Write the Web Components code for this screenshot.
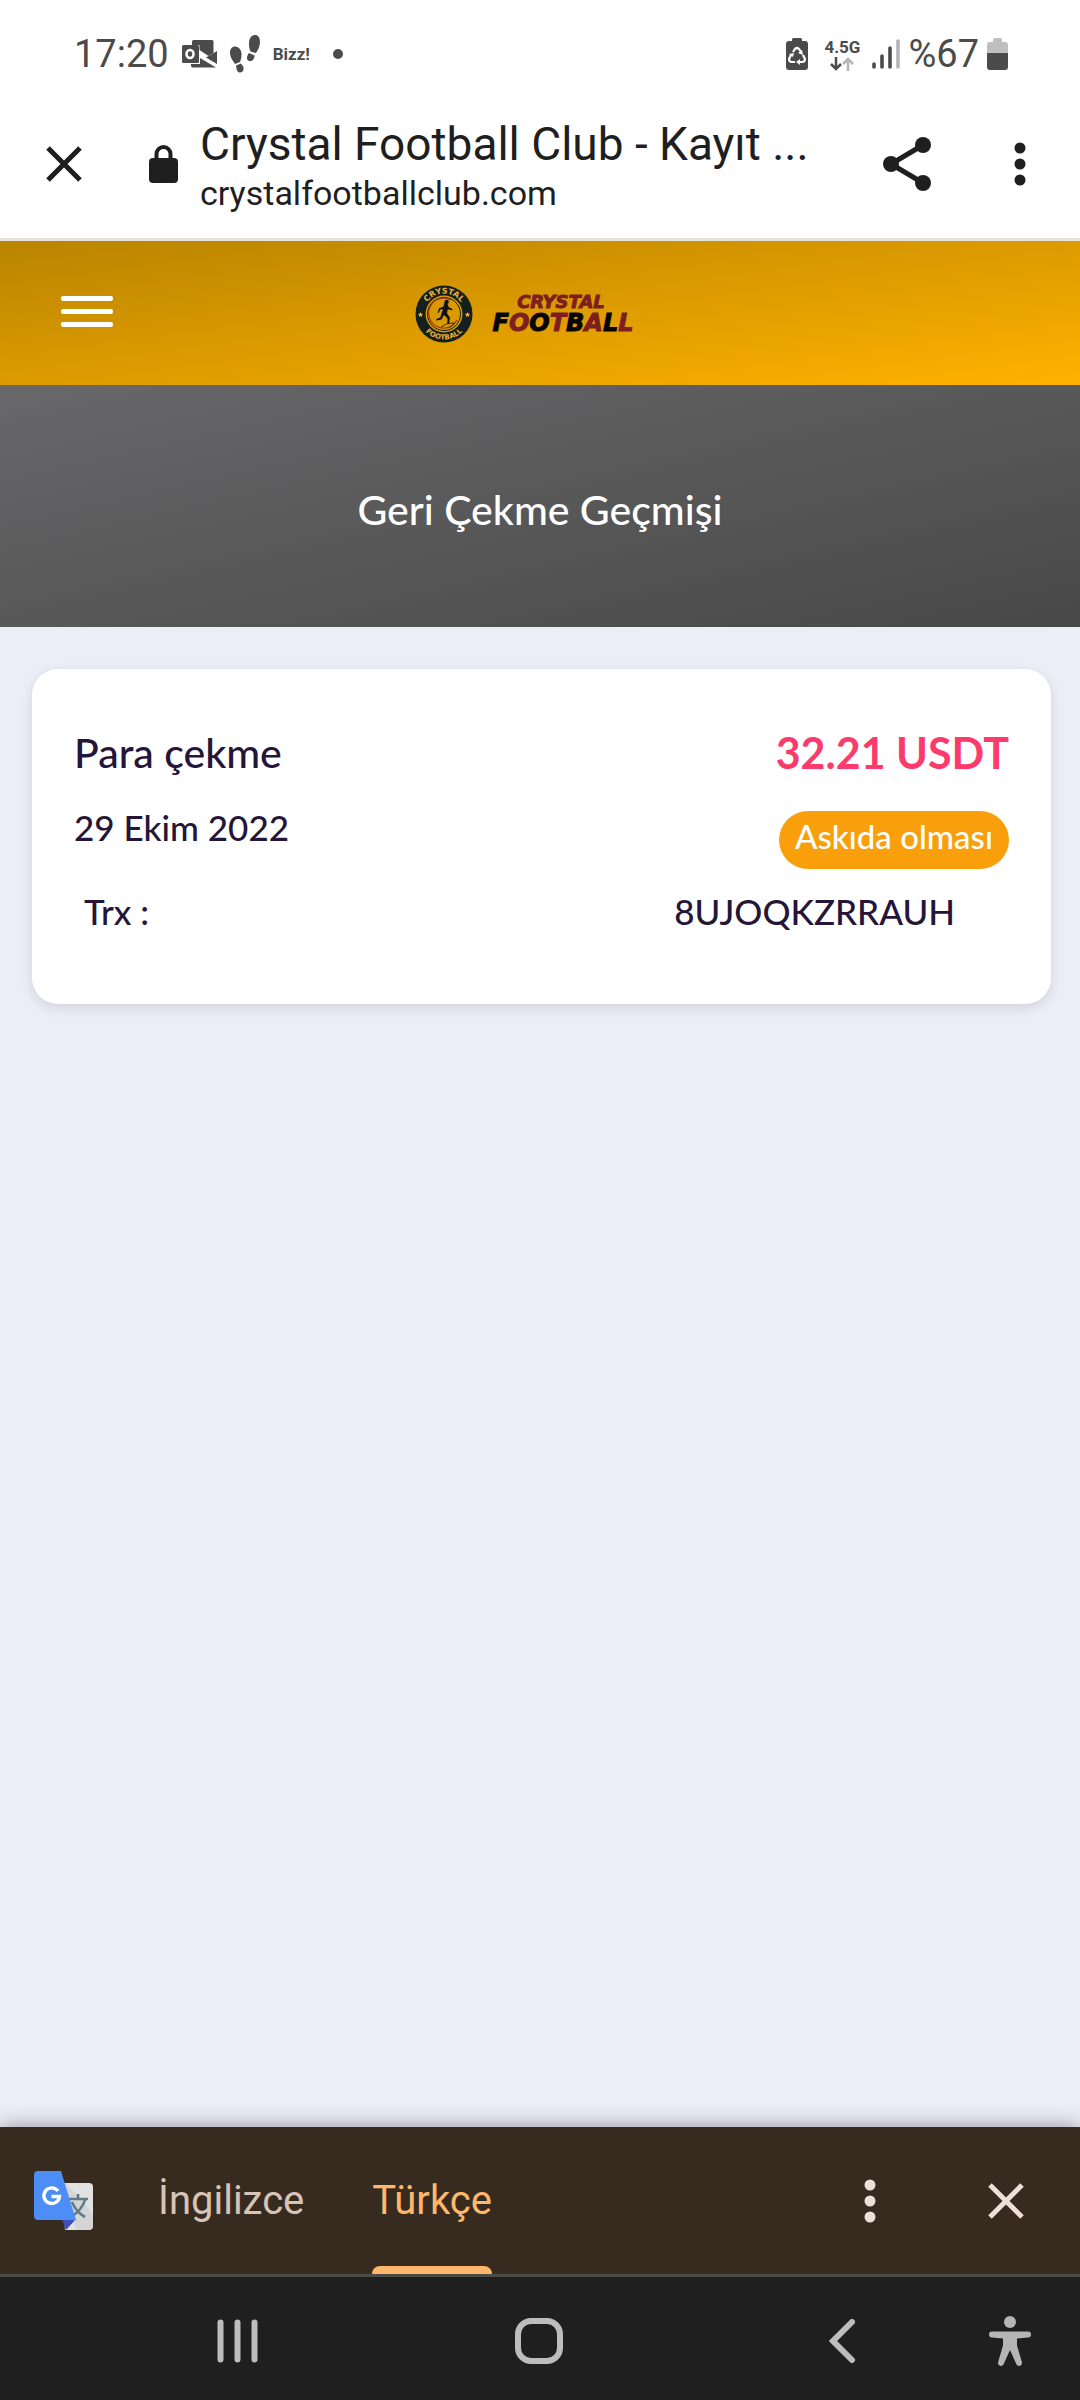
<!DOCTYPE html>
<html lang="tr">
<head>
<meta charset="utf-8">
<meta name="viewport" content="width=device-width, initial-scale=1">
<title>Crystal Football Club - Kayıt</title>
<style>
  html, body { margin: 0; min-height: 100%; }
  body {
    --ui-font: Roboto, "Noto Sans", sans-serif;
    --site-font: Lato, "Open Sans", sans-serif;
    --ink: #1f1f1f;
    font-family: var(--ui-font);
    background: #ecedf6;
  }
  app-shell { min-height: 100vh; }
</style>
</head>
<body>
<app-shell>
  <status-bar slot="top" time="17:20" note="Bizz!" network="4.5G" level="%67"></status-bar>
  <browser-bar slot="top">
    <span slot="title">Crystal Football Club - Kayıt ...</span>
    <span slot="url">crystalfootballclub.com</span>
  </browser-bar>
  <site-header></site-header>
  <page-hero>Geri Çekme Geçmişi</page-hero>
  <withdrawal-card>
    <span slot="kind">Para çekme</span>
    <span slot="amount">32.21 USDT</span>
    <span slot="date">29 Ekim 2022</span>
    <span slot="state">Askıda olması</span>
    <span slot="key">Trx :</span>
    <span slot="code">8UJOQKZRRAUH</span>
  </withdrawal-card>
  <translate-bar slot="bottom"></translate-bar>
  <system-nav slot="bottom"></system-nav>
</app-shell>

<script>
const RESET = `
  :host, *, *::before, *::after { box-sizing: border-box; }
  button { appearance: none; border: 0; margin: 0; padding: 0; background: none; color: inherit; font: inherit; display: flex; align-items: center; justify-content: center; cursor: pointer; }
  svg { display: block; flex: none; }
`;
function define(name, css, html) {
  const template = document.createElement('template');
  customElements.define(name, class extends HTMLElement {
    constructor() {
      super();
      const attrs = key => this.getAttribute(key) || '';
      template.innerHTML = `<style>${RESET}${css}</style>` + (typeof html === 'function' ? html(attrs) : html);
      this.attachShadow({ mode: 'open' }).append(template.content.cloneNode(true));
    }
  });
}
const CLOSE = `<svg width="36" height="36" viewBox="0 0 36 36" fill="none" stroke="currentColor" stroke-width="5"><path d="M2 2 34 34M34 2 2 34"/></svg>`;
const DOTS = `<svg width="12" height="44" viewBox="0 0 12 44" fill="currentColor"><circle cx="6" cy="6" r="5.5"/><circle cx="6" cy="22" r="5.5"/><circle cx="6" cy="38" r="5.5"/></svg>`;

define('app-shell', `
  :host { display: flex; flex-direction: column; }
  main { flex: 1; }
`, `<slot name="top"></slot><main><slot></slot></main><slot name="bottom"></slot>`);

define('status-bar', `
  :host { display: flex; align-items: center; justify-content: space-between; height: 108px; padding: 0 72px 0 74px; background: #fff; color: #4b4b4b; }
  .group { display: flex; align-items: center; }
  .big { font-size: 38px; line-height: 48px; }
  .left { gap: 13px; }
  .right { gap: 8px; }
  .small { font: 700 17px/20px Roboto, sans-serif; }
  .net { display: flex; flex-direction: column; align-items: center; margin: 0 4px 0 8px; }
  .dot { width: 10px; height: 10px; border-radius: 50%; background: currentColor; margin-left: 10px; }
`, a => `
  <div class="group left">
    <span class="big">${a('time')}</span>
    <svg width="35" height="28" viewBox="0 0 35 28"><path fill="#4b4b4b" d="M10 1.500Q10 0 11.500 0H30q1.500 0 1.500 1.500V13l-5 3-9-6V5H10z"/><path fill="#4b4b4b" d="M9 24h9v-6l16 9.500H11q-2 0-2-2zM35 11v13l-11-6.500z"/><rect y="5" width="17" height="18" rx="1.500" fill="#4b4b4b"/><ellipse cx="8" cy="14" rx="3.500" ry="4" fill="none" stroke="#fff" stroke-width="2.500"/></svg>
    <svg width="30" height="38" viewBox="0 0 30 38" fill="#4b4b4b"><path d="M5 11.500c4.500 0 7 4.500 6.500 9 0 3-1 5-1.500 6.500l-5 2C3 26 0 22 0 18c0-4 2-6.500 5-6.500zM6 30.500l5-2 2.500 3.500c.5 3.500-1 5.500-3.500 5.500S6.500 35 6 30.500zM25 0c-4 0-6 4-6 8.500 0 4 .5 6 1.500 8l5.500 1.500c2-3 4-7 4-11C30 2.500 28 0 25 0zM19 18l5.500 2.500c0 4-2.500 6-5 5.500-3-.5-3.500-4-.5-8z"/></svg>
    <span class="small">${a('note')}</span>
    <span class="dot"></span>
  </div>
  <div class="group right">
    <svg width="22" height="32" viewBox="0 0 22 32"><path fill="#4b4b4b" d="M6 3V1.500Q6 0 7.500 0h7Q16 0 16 1.500V3h3q3 0 3 3v23q0 3-3 3H3q-3 0-3-3V6q0-3 3-3z"/><path fill="none" stroke="#fff" stroke-width="2.200" d="m7 14 2-3q2-2 4 0l2 3M17 17l2 4q0 3-3 3h-3M9 24H6q-3 0-3-3l2-4"/><path fill="#fff" d="m16 12 1 5-5-2zM3 16l5-1-1 4zM14 21v6l-4-3z"/></svg>
    <div class="net"><span class="small">${a('network')}</span>
      <svg width="24" height="14" viewBox="0 0 24 14" fill="none" stroke-width="2.500"><path stroke="#4b4b4b" d="M6 0v12M1 7l5 5 5-5"/><path stroke="#b5b5b5" d="M18 14V2M13 7l5-5 5 5"/></svg></div>
    <svg width="28" height="30" viewBox="0 0 28 30" stroke="#4b4b4b" stroke-width="3.600" stroke-linecap="round"><path d="M2 25v3M10 17v11M18 9v19"/><path stroke="#b5b5b5" d="M26 2v26"/></svg>
    <span class="big">${a('level')}</span>
    <svg width="21" height="32" viewBox="0 0 21 32"><path fill="#bfbfbf" d="M6 4V1.500Q6 0 7.500 0h6Q15 0 15 1.500V4h3q3 0 3 3v10H0V7q0-3 3-3z"/><path fill="#4b4b4b" d="M0 15h21v14q0 3-3 3H3q-3 0-3-3z"/></svg>
  </div>`);

define('browser-bar', `
  :host { display: flex; align-items: center; height: 133px; padding: 0 54px 18px 46px; background: #fff; color: var(--ink); border-bottom: 3px solid #e8e2dc; }
  .lock { margin: 0 22px 0 67px; }
  .text { flex: 1; min-width: 0; display: flex; flex-direction: column; white-space: nowrap; }
  .title { font-size: 46px; line-height: 58px; }
  .url { font-size: 34px; line-height: 40px; }
  .more { margin-left: 83px; }
`, `
  <button aria-label="Kapat">${CLOSE}</button>
  <svg class="lock" width="29" height="38" viewBox="0 0 29 38"><path fill="none" stroke="currentColor" stroke-width="4" d="M7.500 15V9a7 7 0 0 1 14 0v6"/><rect y="13" width="29" height="25" rx="4" fill="currentColor"/></svg>
  <div class="text"><span class="title"><slot name="title"></slot></span><span class="url"><slot name="url"></slot></span></div>
  <button aria-label="Paylaş"><svg width="48" height="54" viewBox="0 0 48 54"><path fill="none" stroke="currentColor" stroke-width="5" d="M40 8 8 27l32 19"/><g fill="currentColor"><circle cx="40" cy="8" r="8"/><circle cx="8" cy="27" r="8"/><circle cx="40" cy="46" r="8"/></g></svg></button>
  <button class="more" aria-label="Diğer">${DOTS}</button>`);

define('site-header', `
  :host { display: grid; grid-template-columns: 1fr auto 1fr; align-items: center; height: 144px; padding: 0 61px 4px; background: linear-gradient(to bottom right, #b98400, #ffb200); }
  .menu { width: 52px; flex-direction: column; gap: 8px; }
  .menu i { width: 100%; height: 5px; border-radius: 2px; background: #fff; }
  a { display: block; }
  text { font-family: "DejaVu Sans", sans-serif; font-weight: 700; }
  .word { font-style: oblique; text-anchor: middle; stroke-width: 1; }
`, `
  <button class="menu" aria-label="Menü"><i></i><i></i><i></i></button>
  <a href="#" aria-label="Crystal Football"><svg width="250" height="64" viewBox="0 -4 250 64">
    <circle cx="29" cy="31" r="28.500" fill="#14201f"/><circle cx="29" cy="31" r="18.500" fill="#d99a00"/>
    <circle cx="29" cy="31" r="16.500" fill="none" stroke="#14201f" stroke-width="1"/>
    <path d="M36 17a15 15 0 1 0 6 20" fill="none" stroke="#a5391c" stroke-width="1.200"/>
    <path fill="#111" d="M29.500 18.500a2.200 2.200 0 1 1 3 2.500l1.500 3.500 3.500 1.500-.5 1.200-4.200-1-.8 4 3 4.500-1 6.500-1.800-.2.300-5.500-3.500-3.500-2.500 4.500-5 1-.3-1.500 4-1.500 2.800-8.500-3 .8-1.200 3.200-1.200-.5 1.400-4.200 4.500-1.800z"/>
    <path d="M26 44q6-5 14-4M34 45l5-4" stroke="#40310a" stroke-width="1" fill="none"/>
    <path id="up" d="M8.500 31a20.500 20.500 0 0 1 41 0" fill="none"/><path id="down" d="M3.500 31a25.500 25.500 0 0 0 51 0" fill="none"/>
    <g fill="#edb335" font-size="8"><text text-anchor="middle"><textPath href="#up" startOffset="50%">CRYSTAL</textPath></text><text font-size="7" text-anchor="middle"><textPath href="#down" startOffset="50%">FOOTBALL</textPath></text>
    <path d="m5.500 29 .8 1.700 1.800.2-1.300 1.300.3 1.800-1.600-.9-1.600.9.300-1.800L2.900 31l1.800-.3zM52.500 29l.8 1.700 1.800.2-1.300 1.300.3 1.800-1.600-.9-1.600.9.300-1.800-1.300-1.200 1.800-.3z"/></g>
    <g class="word">
      <text x="146" y="25" font-size="18" fill="#7e1f1f" stroke="#7e1f1f">CRYSTAL</text>
      <text x="148" y="48" font-size="24"><tspan fill="#050505" stroke="#050505">F</tspan><tspan fill="#7e1f1f" stroke="#7e1f1f">O</tspan><tspan fill="#050505" stroke="#050505">O</tspan><tspan fill="#7e1f1f" stroke="#7e1f1f">T</tspan><tspan fill="#050505" stroke="#050505">B</tspan><tspan fill="#7e1f1f" stroke="#7e1f1f">A</tspan><tspan fill="#050505" stroke="#050505">L</tspan><tspan fill="#7e1f1f" stroke="#7e1f1f">L</tspan></text>
    </g></svg></a>`);

define('page-hero', `
  :host { display: flex; align-items: center; justify-content: center; height: 242px; padding-top: 8px; background: linear-gradient(to bottom right, #68686a, #484848); }
  h1 { margin: 0; color: #fff; font: 500 41px/48px var(--site-font); }
`, `<h1><slot></slot></h1>`);

define('withdrawal-card', `
  :host { display: block; margin: 42px 29px 42px 32px; padding: 56px 42px 70px; border-radius: 26px; background: #fff; color: #241539; box-shadow: 0 4px 12px rgba(40, 40, 60, .13); font-family: var(--site-font); font-weight: 500; }
  .row { display: flex; justify-content: space-between; }
  .kind { font-size: 41px; line-height: 56px; }
  .amount { font-size: 43px; line-height: 56px; font-weight: 700; color: #fc3a6b; }
  .state-row { margin-top: 30px; }
  .date { font-size: 35px; line-height: 32px; }
  .state { height: 58px; padding: 0 16px; border-radius: 29px; background: #f99f0c; color: #fff; font-size: 33px; line-height: 50px; }
  .trx { padding: 19px 54px 0 10px; font-size: 35px; line-height: 46px; }
`, `
  <div class="row"><span class="kind"><slot name="kind"></slot></span><span class="amount"><slot name="amount"></slot></span></div>
  <div class="row state-row"><span class="date"><slot name="date"></slot></span><span class="state"><slot name="state"></slot></span></div>
  <div class="row trx"><span><slot name="key"></slot></span><span><slot name="code"></slot></span></div>`);

define('translate-bar', `
  :host { display: flex; align-items: stretch; height: 150px; padding: 0 56px 0 34px; background: #372b20; color: #ede0d8; border-bottom: 3px solid #4a4a49; box-shadow: 0 0 20px rgba(0, 0, 0, .4); font-size: 40px; }
  .logo { align-self: center; margin-right: 65px; }
  .tabs { display: flex; gap: 68px; flex: 1; }
  .tabs button { color: #d7c3b7; line-height: 60px; flex-direction: column; }
  .tabs button::before, .tabs button::after { content: ""; width: 100%; height: 8px; margin-bottom: auto; }
  .tabs button::after { margin: auto 0 0; border-radius: 8px 8px 0 0; }
  .tabs .on { color: #ffb86b; }
  .tabs .on::after { background: #ffb86b; }
  .more { margin-right: 112px; }
`, `
  <svg class="logo" width="59" height="60" viewBox="0 0 59 60"><path fill="#e2e2e2" d="M28 12h27q4 0 4 4v39q0 4-4 4H31z"/><path fill="#c6c6c6" d="M31 12l18 18 10 14v11q0 4-4 4H42L36 36z" opacity=".45"/><path fill="none" stroke="#5f7d86" stroke-width="2.600" d="M35 28h19M44 23v5M51 29q-3 10-14 17M38 31q4 10 13 15"/><path fill="#3f4fb8" d="M28 48h14L32 59z"/><path fill="#4c8df6" d="M4 0h23l15 49H4q-4 0-4-4V4q0-4 4-4z"/><path fill="none" stroke="#fff" stroke-width="3.400" d="M24 20a7.800 7.800 0 1 0 1.500 5.500H17.500"/></svg>
  <div class="tabs"><button>İngilizce</button><button class="on" aria-pressed="true">Türkçe</button></div>
  <button class="more" aria-label="Seçenekler">${DOTS}</button>
  <button aria-label="Kapat">${CLOSE}</button>`);

define('system-nav', `
  :host { display: grid; grid-template-columns: repeat(3, 1fr) 34px; align-items: center; justify-items: center; height: 123px; padding: 4px 53px 0 86px; background: #1f1f1f; color: #bdbdbd; }
`, `
  <button aria-label="Son uygulamalar"><svg width="41" height="44" viewBox="0 0 41 44" stroke="currentColor" stroke-width="6" stroke-linecap="round"><path d="M3.500 3.500v37M20.500 3.500v37M37.500 3.500v37"/></svg></button>
  <button aria-label="Ana ekran"><svg width="48" height="46" viewBox="0 0 48 46"><rect x="3" y="3" width="42" height="40" rx="13" fill="none" stroke="currentColor" stroke-width="6"/></svg></button>
  <button aria-label="Geri"><svg width="26" height="44" viewBox="0 0 26 44" fill="none" stroke="currentColor" stroke-width="6" stroke-linecap="round"><path d="M23 3 4 22l19 19"/></svg></button>
  <button aria-label="Erişilebilirlik"><svg width="42" height="50" viewBox="0 0 42 50" fill="#b5b5b5"><circle cx="21" cy="6" r="6"/><path d="M3 15.500h36a3 3 0 0 1 0 6L28 22.500v7l5 17a3 3 0 0 1-5.500 2L21 34l-6.500 14.500a3 3 0 0 1-5.500-2l5-17v-7L3 21.500a3 3 0 0 1 0-6z"/></svg></button>`);
</script>
</body>
</html>
